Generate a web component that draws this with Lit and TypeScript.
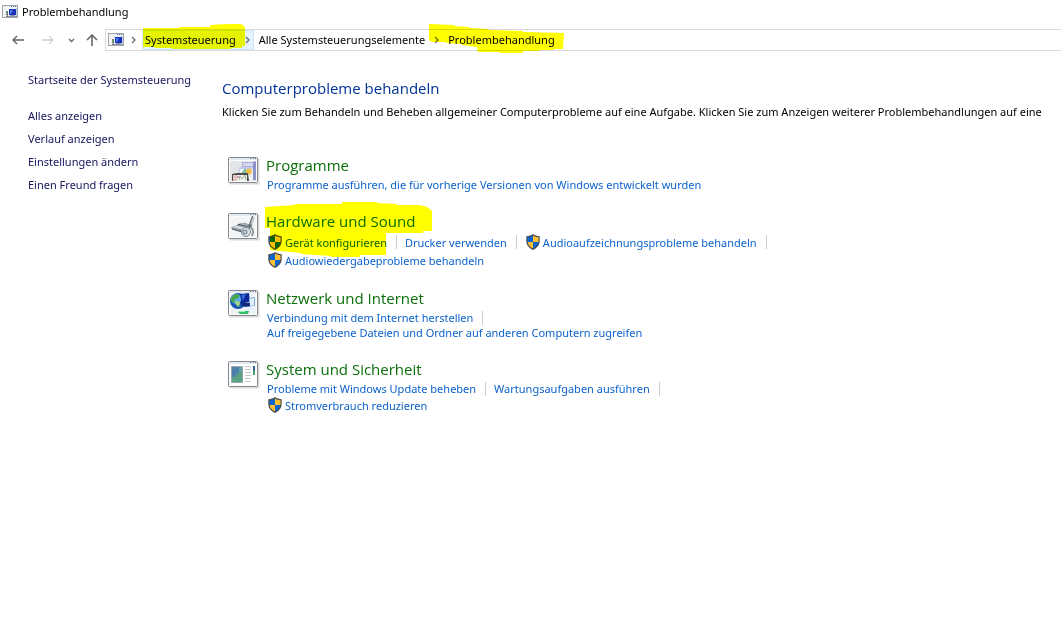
import { LitElement, html, css, svg, nothing } from "lit";
import { customElement, property } from "lit/decorators.js";

type Task = { label: string; shield?: boolean; end?: boolean };
type Category = { title: string; icon: string; rows: Task[][]; marked?: boolean };

const categories: Category[] = [
  {
    title: "Programme",
    icon: "programs",
    rows: [[{ label: "Programme ausführen, die für vorherige Versionen von Windows entwickelt wurden", end: true }]],
  },
  {
    title: "Hardware und Sound",
    icon: "hardware",
    marked: true,
    rows: [
      [
        { label: "Gerät konfigurieren", shield: true },
        { label: "Drucker verwenden" },
        { label: "Audioaufzeichnungsprobleme behandeln", shield: true },
      ],
      [{ label: "Audiowiedergabeprobleme behandeln", shield: true, end: true }],
    ],
  },
  {
    title: "Netzwerk und Internet",
    icon: "network",
    rows: [
      [{ label: "Verbindung mit dem Internet herstellen" }],
      [{ label: "Auf freigegebene Dateien und Ordner auf anderen Computern zugreifen", end: true }],
    ],
  },
  {
    title: "System und Sicherheit",
    icon: "system",
    rows: [
      [{ label: "Probleme mit Windows Update beheben" }, { label: "Wartungsaufgaben ausführen" }],
      [{ label: "Stromverbrauch reduzieren", shield: true, end: true }],
    ],
  },
];

const sideLinks = ["Alles anzeigen", "Verlauf anzeigen", "Einstellungen ändern", "Einen Freund fragen"];

const windowFrame = svg`
  <rect x="1.5" y="1.5" width="30" height="26" rx="1" fill="#000" opacity=".14"/>
  <rect x=".5" y=".5" width="29" height="25" rx="1" fill="#fafbfb" stroke="#858a92"/>
  <rect x="1" y="1" width="28" height="2" fill="#e4e9ef"/>
  <path d="M22 1.500h1M24.500 1.500h1M27 1.500h1" stroke="#5c6a80"/>`;

const pictures: Record<string, unknown> = {
  programs: svg`
    <rect x="2" y="4" width="26" height="20" fill="#e3e5e7"/>
    <path d="M14 5h14v5H14z" fill="#aeb2dc"/><path d="M15 6h10v3H15z" fill="#d5d8f1"/>
    <path d="M11 10h17v13H11z" fill="#c4c8ea"/><path d="M12 12h13v11H12z" fill="#eef1fa"/>
    <path d="M25 5l3-1v19h-3z" fill="#8d92c9"/>
    <path d="M13 17l4-6 4 6z" fill="#79bd9a"/><circle cx="21" cy="14.500" r="3" fill="#eebd4b"/>
    <path d="M4 17l5-1h11l1 8H4z" fill="#4b4b4d"/>
    <path d="M5 18h4v6H5z" fill="#e4c2bd"/><path d="M9 18h10v6H9z" fill="#eff0ea"/>
    <path d="M11 23l1-4 2 3 3-4 1 5" fill="none" stroke="#a0b59e"/><circle cx="10" cy="20" r="1" fill="#bd83b0"/>`,
  hardware: svg`
    <rect x="2" y="4" width="26" height="20" fill="#f3f4f5"/>
    <path d="M24 3l3 1-3 10-4-1z" fill="#c4c9ce"/><path d="M24.500 3l-3 9" stroke="#555b62"/>
    <path d="M10 11l6-1 8 2-2 3H8z" fill="#4f5960"/><path d="M11 11l4-1 7 2-2 1z" fill="#adb9c1"/>
    <path d="M3 14l8-2 11 2v3l-6 2-12-3z" fill="#8c959c"/><path d="M3 14l7-1 10 2-4 2z" fill="#d8dfe3"/>
    <path d="M4 16l10 3" stroke="#4d555c"/>
    <circle cx="18" cy="19" r="4.500" fill="#d8e0e5" stroke="#7c878f"/>
    <circle cx="17" cy="19" r="2.500" fill="#7f91a0"/><circle cx="17" cy="19" r="1" fill="#e8f1f5"/>
    <path d="M22 14c3 1 4 5 2 9" fill="none" stroke="#8d959c" stroke-width="2"/>`,
  network: svg`
    <rect x="2" y="4" width="26" height="20" fill="#f0f3f5"/>
    <circle cx="10" cy="11" r="8" fill="#1756b4"/>
    <circle cx="8" cy="9" r="5" fill="#58aee6"/>
    <path d="M3 8l4-4 5 1-2 3-3 1-1 4-3-2z" fill="#47a84b"/><path d="M7 11l5 1-1 5-3-2z" fill="#a9db79"/>
    <path d="M12 4l9-1 1 9-8 1z" fill="#0b2799"/><path d="M13 5l5-1-3 7z" fill="#3565dc"/>
    <path d="M21 8l6-1v9l-6 1z" fill="#8bb2dc"/><path d="M22 9l4-1v7l-4 1z" fill="#e2f0fb"/>
    <path d="M12 12l10 1v5l-8-2z" fill="#10277f"/><path d="M16 17l10-1 1 3-10 1z" fill="#e6f2ff"/>
    <path d="M10 22l3-1 8 0-1 3h-8z" fill="#32bd67"/><path d="M12 21.500h5" stroke="#91edac"/>`,
  system: svg`
    <rect x="2" y="4" width="26" height="20" fill="#fff"/>
    <path d="M3.500 5.500h11v16h-11z" fill="#669fae" stroke="#9ba7ae"/>
    <path d="M4 6h7v10H4z" fill="#4e80aa"/><path d="M4 17l10-8v12H4z" fill="#58a279" opacity=".8"/>
    <path d="M17 5.500h6M17 8.500h6M17 11.500h6M17 14.500h6M17 17.500h6M17 20.500h6" stroke="#c2c6ca"/>
    <rect x="25" y="5" width="2" height="9" fill="#2d65a3"/><rect x="25" y="10" width="2" height="4" fill="#49a16b"/>`,
};

const appIcon = html`<svg class="app-icon" width="16" height="14" viewBox="0 0 16 14" aria-hidden="true">
  <rect x=".5" y=".5" width="15" height="12" fill="#f2f4f6" stroke="#a0a5ac"/>
  <path d="M1 1.500h14" stroke="#e6ebf1"/>
  <path d="M9 1.500h1M11 1.500h1M13 1.500h1" stroke="#55647b"/>
  <path d="M7 4h7v6H7z" fill="#1431b8"/><path d="M8 5h3l-2 4H8z" fill="#4e79ec"/><path d="M14 3h1v8h-1z" fill="#bcc9e8"/>
  <path d="M8 10h5v1h2v1H6v-1h2z" fill="#8a92a4"/>
  <path d="M4 6h2v6H4z" fill="#737b80"/><path d="M4 7h1v2H4z" fill="#4dbc55"/><path d="M4 10h1v1H4z" fill="#e2e5e8"/>
</svg>`;

const shield = html`<svg class="shield" width="14" height="16" viewBox="0 0 14 16" aria-hidden="true">
  <path d="M7 0C5 1.500 3 2 .3 2.200V7c0 4 2.500 7 6.700 9 4.200-2 6.700-5 6.700-9V2.200C11 2 9 1.500 7 0z" fill="#4a4d50"/>
  <path d="M7 1.500V8H1.500V3.300C4 3.100 5.500 2.500 7 1.500z" fill="#0c66cf"/>
  <path d="M7 1.500V8h5.500V3.300C10 3.100 8.500 2.500 7 1.500z" fill="#ffc032"/>
  <path d="M1.600 8H7v6.600C3.800 13 2 10.800 1.600 8z" fill="#ffc032"/>
  <path d="M12.400 8H7v6.600c3.200-1.600 5-3.800 5.400-6.600z" fill="#0c66cf"/>
</svg>`;

const chevron = html`<svg class="chevron" width="5" height="8" viewBox="0 0 5 8" aria-hidden="true">
  <path d="M1 1l3 3-3 3" fill="none" stroke="#707070" stroke-width="1.400"/>
</svg>`;

@customElement("category-block")
class CategoryBlock extends LitElement {
  @property({ attribute: false }) category!: Category;

  static styles = css`
    :host { display: grid; grid-template-columns: 32px minmax(0, 1fr); column-gap: 6px; }
    .picture { margin-top: 2px; display: block; }
    .body { position: relative; }
    h2 { margin: 0; font-family: "Segoe UI", "Open Sans", sans-serif; font-size: 15px; line-height: 20px; padding-bottom: 2px; font-weight: 400; color: #0a6e0a; }
    h2 a { color: inherit; text-decoration: none; }
    .row { display: flex; align-items: center; min-height: 15px; padding-left: 1px; line-height: 15px; white-space: nowrap; }
    .row.tall { min-height: 18px; }
    .task { display: flex; align-items: center; gap: 3px; color: #0b62cc; text-decoration: none; }
    .task:hover { text-decoration: underline; }
    .shield { margin: 0 0 0 1px; }
    .divider { width: 1px; height: 14px; margin: 0 8px 0 9px; background: #ccc; }
    .marker { position: absolute; left: -1px; top: -9px; mix-blend-mode: multiply; pointer-events: none; }
  `;

  render() {
    const c = this.category;
    return html`
      <svg class="picture" width="32" height="28" viewBox="0 0 32 28" aria-hidden="true">${windowFrame}${pictures[c.icon]}</svg>
      <div class="body">
        <h2><a href="#">${c.title}</a></h2>
        ${c.rows.map(
          (row) => html`<div class="row ${row.some((t) => t.shield) ? "tall" : ""}">
            ${row.map(
              (t) => html`<a class="task" href="#">${t.shield ? shield : nothing}<span>${t.label}</span></a>${t.end ? nothing : html`<span class="divider"></span>`}`
            )}
          </div>`
        )}
        ${c.marked
          ? html`<svg class="marker" width="168" height="56" viewBox="0 0 168 56" aria-hidden="true">
              <path d="M0 5L30 3V2L77 2V0H112V1L132 2V3H155L162 5L167 9V29H158V31H121V53H95V55H66V54L36 52V51L5 48V26H0z" fill="#ff0"/>
            </svg>`
          : nothing}
      </div>
    `;
  }
}

@customElement("app-root")
class AppRoot extends LitElement {
  static styles = css`
    :host { display: block; min-height: 100vh; overflow: hidden; background: #fff; color: #000; font-family: "Segoe UI", "Noto Sans", sans-serif; font-size: 11px; }
    a { text-decoration: none; color: inherit; }
    .titlebar { display: flex; align-items: center; gap: 4px; height: 24px; padding-left: 2px; }
    .title { line-height: 16px; }
    .app-icon { display: block; flex: none; }
    .toolbar { display: flex; align-items: center; height: 32px; }
    button { display: flex; align-items: center; justify-content: center; height: 22px; margin: 0; padding: 0; border: 0; background: none; font: inherit; color: #666; }
    .arrow { width: 30px; }
    .forward { color: #d0d0d0; }
    .recent { width: 16px; }
    .up { width: 25px; }
    .history { display: flex; padding-left: 3px; }
    .address { display: flex; align-items: center; flex: 1; height: 20px; border: 1px solid #d9d9d9; border-right: 0; padding-left: 2px; margin-left: 1px; white-space: nowrap; line-height: 16px; }
    .address > .app-icon { margin-right: 7px; }
    .root-chevron { display: flex; width: 9px; }
    .crumb { position: relative; display: flex; align-items: center; height: 20px; }
    .crumb .name { padding: 0 9px 0 5px; }
    .crumb.hot { box-sizing: border-box; margin-left: 2px; padding-right: 3px; border: 1px solid #cce8ff; background: #e5f3ff; }
    .crumb.hot .name { padding-left: 2px; }
    .crumb.current .name { padding-left: 9px; }
    .marker { position: absolute; mix-blend-mode: multiply; pointer-events: none; }
    .marker.first { left: 0; top: -7px; }
    .marker.last { left: -10px; top: -6px; }
    .page { display: grid; grid-template-columns: 194px minmax(0, 1fr); padding: 16px 0 0 28px; }
    .side { display: flex; flex-direction: column; align-items: flex-start; color: #15155e; line-height: 16px; }
    .side ul { list-style: none; margin: 20px 0 0; padding: 0; display: flex; flex-direction: column; gap: 7px; }
    main { min-width: 0; overflow: hidden; padding-top: 5px; }
    h1 { margin: 0; font-family: "Segoe UI", "Open Sans", sans-serif; font-size: 15px; line-height: 22px; padding-bottom: 2px; font-weight: 400; color: #003399; }
    .intro { margin: 3px 0 0; line-height: 16px; white-space: nowrap; }
    .categories { display: flex; flex-direction: column; gap: 19px; padding: 35px 0 0 6px; }
  `;

  render() {
    return html`
      <header>
        <div class="titlebar">${appIcon}<span class="title">Problembehandlung</span></div>
        <nav class="toolbar" aria-label="Navigation">
          <div class="history">
            <button class="arrow" aria-label="Zurück"><svg width="12" height="10" viewBox="0 0 12 10"><path d="M12 5H1M5 1L1 5l4 4" fill="none" stroke="currentColor" stroke-width="1.500"/></svg></button>
            <button class="arrow forward" aria-label="Vorwärts"><svg width="12" height="10" viewBox="0 0 12 10"><path d="M0 5h11M7 1l4 4-4 4" fill="none" stroke="currentColor" stroke-width="1.300"/></svg></button>
            <button class="recent" aria-label="Zuletzt besucht"><svg width="7" height="5" viewBox="0 0 7 5"><path d="M1 1l2.500 2.500L6 1" fill="none" stroke="currentColor" stroke-width="1.300"/></svg></button>
            <button class="up" aria-label="Nach oben"><svg width="12" height="12" viewBox="0 0 12 12"><path d="M6 12V1M1 6l5-5 5 5" fill="none" stroke="currentColor" stroke-width="1.600"/></svg></button>
          </div>
          <div class="address">
            ${appIcon}
            <span class="root-chevron">${chevron}</span>
            <span class="crumb hot">
              <a class="name" href="#">Systemsteuerung</a>${chevron}
              <svg class="marker first" width="103" height="26" viewBox="0 0 103 26" aria-hidden="true"><path d="M0 4H36V3H67V1L84 0H98L102 3V22H99V24H88V25H29V24H12V23H0z" fill="#ff0"/></svg>
            </span>
            <span class="crumb"><a class="name" href="#">Alle Systemsteuerungselemente</a>${chevron}</span>
            <span class="crumb current">
              <a class="name" href="#">Problembehandlung</a>
              <svg class="marker last" width="136" height="30" viewBox="0 0 136 30" aria-hidden="true"><path d="M0 0L25 1V2L40 3V4L60 5V6L94 7V8L135 9L134 25H125V26H110V27H94V29H71V28H49L48 23L33 21V20L17 19V18H3L0 16z" fill="#ff0"/></svg>
            </span>
          </div>
        </nav>
      </header>
      <div class="page">
        <nav class="side" aria-label="Aufgaben">
          <a href="#">Startseite der Systemsteuerung</a>
          <ul>${sideLinks.map((l) => html`<li><a href="#">${l}</a></li>`)}</ul>
        </nav>
        <main>
          <h1>Computerprobleme behandeln</h1>
          <p class="intro">Klicken Sie zum Behandeln und Beheben allgemeiner Computerprobleme auf eine Aufgabe. Klicken Sie zum Anzeigen weiterer Problembehandlungen auf eine</p>
          <div class="categories">${categories.map((c) => html`<category-block .category=${c}></category-block>`)}</div>
        </main>
      </div>
    `;
  }
}
